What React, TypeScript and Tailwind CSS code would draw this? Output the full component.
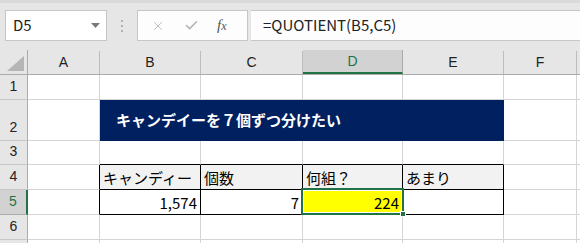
import { X, Check } from "lucide-react";

const cols = [
  { k: "A", w: 72 },
  { k: "B", w: 101 },
  { k: "C", w: 102 },
  { k: "D", w: 100 },
  { k: "E", w: 101 },
  { k: "F", w: 73 },
  { k: "", w: 100 },
];

const rows = [
  { n: 1, h: 25 },
  { n: 2, h: 41 },
  { n: 3, h: 24 },
  { n: 4, h: 25 },
  { n: 5, h: 25 },
  { n: 6, h: 25 },
  { n: 7, h: 25 },
];

const jp = { fontFamily: '"Noto Sans CJK JP", "Noto Sans", sans-serif' };

// table borders for B4:E5 are black, the rest are gridlines
function rightBlack(r: number, c: string) {
  return (r === 4 || r === 5) && ["A", "B", "C", "D", "E"].includes(c);
}
function bottomBlack(r: number, c: string) {
  return (r === 3 || r === 4 || r === 5) && ["B", "C", "D", "E"].includes(c);
}

function Cell({ r, c, w, h }: { r: number; c: string; w: number; h: number }) {
  const rb = rightBlack(r, c) ? "border-r-black" : "border-r-[#d4d4d4]";
  const bb = bottomBlack(r, c) ? "border-b-black" : "border-b-[#d4d4d4]";
  let bg = "bg-white";
  let text = "";
  let align = "justify-start pl-[3px]";
  if (r === 4) {
    if (["B", "C", "D", "E"].includes(c)) bg = "bg-[#f2f2f2]";
    text = { B: "キャンディー", C: "個数", D: "何組？", E: "あまり" }[c] ?? "";
  }
  if (r === 5) {
    text = { B: "1,574", C: "7", D: "224" }[c] ?? "";
    align = "justify-end pr-[3px]";
    if (c === "D") bg = "bg-[#ffff00]";
  }
  return (
    <div
      className={`relative flex shrink-0 items-center box-border border-r border-b text-[15px] text-black ${rb} ${bb} ${bg} ${align}`}
      style={{ width: w, height: h, ...jp }}
    >
      <span className="leading-none">{text}</span>
      {r === 5 && c === "D" && (
        <div className="absolute -left-[2px] -top-[2px] z-10 h-[27px] w-[103px] border-2 border-[#217346]">
          <div className="h-full w-full border border-white" />
          <div className="absolute -bottom-[4px] -right-[4px] h-[6px] w-[6px] border border-white bg-[#217346]" />
        </div>
      )}
    </div>
  );
}

export default function App() {
  return (
    <div className="h-[243px] w-[580px] overflow-hidden bg-[#e6e6e6]" style={{ fontFamily: '"Liberation Sans", sans-serif' }}>
      {/* formula bar */}
      <div className="flex h-[50px] items-start border-t-[3px] border-[#dadada] pt-[7px]">
        <div className="ml-[5px] flex h-[31px] w-[102px] items-center justify-between border border-[#c6c6c6] bg-white pl-[7px] pr-[6px]">
          <span className="text-[15px] text-[#222]" style={jp}>D5</span>
          <svg width="9" height="5" viewBox="0 0 9 5"><path d="M0 0h9L4.5 5z" fill="#7a7a7a" /></svg>
        </div>
        <div className="ml-[14px] mt-[10px] flex flex-col gap-[3px]">
          <div className="h-[2px] w-[2px] bg-[#b0b0b0]" />
          <div className="h-[2px] w-[2px] bg-[#b0b0b0]" />
          <div className="h-[2px] w-[2px] bg-[#b0b0b0]" />
        </div>
        <div className="ml-[14px] flex h-[31px] w-[111px] items-center border border-[#c6c6c6] bg-[#fdfdfd]">
          <X className="ml-[13px] text-[#b4b4b4]" size={14} strokeWidth={1.5} />
          <Check className="ml-[19px] text-[#b4b4b4]" size={15} strokeWidth={2.5} />
          <span className="ml-[18px] text-[15px] italic text-[#555]" style={{ fontFamily: '"Liberation Serif", serif' }}>
            f<span className="text-[12px]">x</span>
          </span>
        </div>
        <div className="ml-[3px] flex h-[31px] flex-1 items-center border-y border-[#c6c6c6] bg-[#fdfdfd] pl-[12px]">
          <span className="text-[15px] text-[#222]" style={jp}>=QUOTIENT(B5,C5)</span>
        </div>
      </div>

      {/* column headers */}
      <div className="flex h-[25px] border-b border-[#ababab]">
        <div className="relative flex w-[28px] shrink-0 items-end justify-end border-r border-[#ababab] pb-[3px] pr-[3px]">
          <svg width="17" height="15" viewBox="0 0 17 15"><path d="M17 0V15H0z" fill="#b5b5b5" /></svg>
        </div>
        {cols.map((c, i) =>
          c.k === "D" ? (
            <div
              key={i}
              className="flex shrink-0 items-center justify-center border-r border-b-2 border-r-[#ababab] border-b-[#217346] bg-[#d2d2d2] text-[14px] text-[#217346]"
              style={{ width: c.w }}
            >
              D
            </div>
          ) : (
            <div
              key={i}
              className="mt-[1px] flex shrink-0 items-center justify-center border-r border-[#bdbdbd] text-[14px] text-[#222]"
              style={{ width: c.w }}
            >
              {c.k}
            </div>
          )
        )}
      </div>

      {/* rows */}
      {rows.map((r) => (
        <div key={r.n} className="flex">
          <div
            className={`flex w-[28px] shrink-0 items-end justify-center border-b pb-[2px] text-[14px] ${
              r.n === 5
                ? "border-r-2 border-b-[#ababab] border-r-[#217346] bg-[#d2d2d2] text-[#217346]"
                : "border-r border-b-[#c6c6c6] border-r-[#ababab] text-[#222]"
            }`}
            style={{ height: r.h }}
          >
            {r.n < 7 ? r.n : ""}
          </div>
          {r.n === 2 ? (
            <>
              <Cell r={2} c="A" w={72} h={41} />
              <div
                className="flex shrink-0 items-center bg-[#002060] pl-[16px] text-[15px] font-bold text-white"
                style={{ width: 404, height: 41, ...jp }}
              >
                キャンデイーを７個ずつ分けたい
              </div>
              <Cell r={2} c="F" w={73} h={41} />
              <Cell r={2} c="G" w={100} h={41} />
            </>
          ) : (
            cols.map((c, i) => <Cell key={i} r={r.n} c={c.k} w={c.w} h={r.h} />)
          )}
        </div>
      ))}
    </div>
  );
}
